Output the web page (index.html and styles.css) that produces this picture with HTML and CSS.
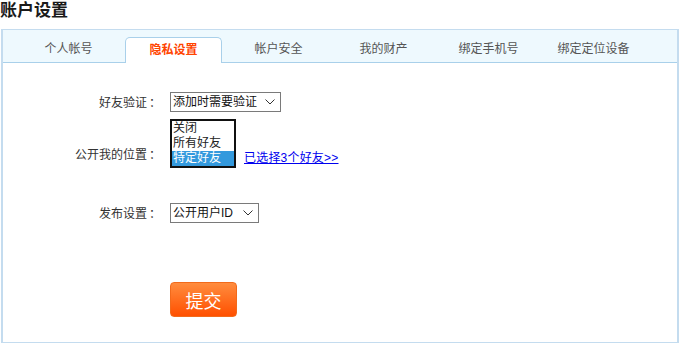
FILE: index.html
```html
<!DOCTYPE html>
<html lang="zh-CN">
<head>
    <meta charset="UTF-8">
    <title>账户设置</title>
    <link rel="stylesheet" href="styles.css">
</head>
<body>
    <h1 class="page-title">账户设置</h1>

    <div class="panel">
        <!-- 选项卡 -->
        <ul class="tabs">
            <li class="tab">个人帐号</li>
            <li class="tab active">隐私设置</li>
            <li class="tab">帐户安全</li>
            <li class="tab">我的财产</li>
            <li class="tab">绑定手机号</li>
            <li class="tab">绑定定位设备</li>
        </ul>

        <!-- 隐私设置表单 -->
        <form class="privacy-form">
            <div class="row">
                <label class="row-label">好友验证<span class="colon">：</span></label>
                <select class="drop drop-verify">
                    <option>添加时需要验证</option>
                    <option>允许任何人添加</option>
                    <option>拒绝任何人添加</option>
                </select>
            </div>

            <div class="row row-location">
                <label class="row-label">公开我的位置<span class="colon">：</span></label>
                <div class="listbox">
                    <div class="listbox-item">关闭</div>
                    <div class="listbox-item">所有好友</div>
                    <div class="listbox-item selected">特定好友</div>
                </div>
                <a class="friends-link" href="#">已选择3个好友&gt;&gt;</a>
            </div>

            <div class="row row-publish">
                <label class="row-label">发布设置<span class="colon">：</span></label>
                <select class="drop drop-publish">
                    <option>公开用户ID</option>
                    <option>匿名发布</option>
                </select>
            </div>

            <div class="row row-submit">
                <button type="button" class="submit-btn">提交</button>
            </div>
        </form>
    </div>
</body>
</html>
```

FILE: styles.css
```css
/* 账户设置 - 隐私设置页 */
body {
    margin: 0;
    font-family: "Liberation Sans", "Noto Sans CJK SC", sans-serif;
    font-size: 12px;
    color: #333;
    background: #fff;
}
.page-title {
    margin: 0 0 7px;
    font-size: 17px;
    line-height: 22px;
    color: #1a1a1a;
    font-weight: bold;
}
.panel {
    margin-left: 1px;
    width: 678px;
    height: 314px;
    box-sizing: border-box;
    border: 1px solid #c4dcef;
    border-left-width: 2px;
    border-right-width: 2px;
}
.tabs {
    list-style: none;
    margin: 0;
    padding: 7px 0 0 17px;
    height: 25px;
    display: flex;
    background: #eef9fe;
    border-bottom: 1px solid #a9d0ea;
}
.tab {
    width: 97px;
    height: 25px;
    margin-right: 8px;
    box-sizing: border-box;
    text-align: center;
    line-height: 24px;
    font-size: 12px;
    color: #555;
}
.tab.active {
    background: #fff;
    border: 1px solid #a9d0ea;
    border-bottom: none;
    border-radius: 5px 5px 0 0;
    height: 26px;
    color: #ff4400;
    font-weight: bold;
}
.privacy-form {
    padding-top: 29px;
}
.row {
    display: flex;
    align-items: center;
}
.row-label {
    width: 158px;
    text-align: right;
    margin-right: 9px;
    line-height: 16px;
    color: #333;
}
/* 居中的全角冒号 */
.colon {
    font-family: "Noto Sans CJK TC", sans-serif;
    margin-left: 2px;
}
.drop {
    -webkit-appearance: none;
    appearance: none;
    height: 20px;
    margin: 0;
    padding: 0 20px 0 2px;
    border: 1px solid #7a7a7a;
    border-radius: 0;
    font-family: "Liberation Sans", "Noto Sans CJK SC", sans-serif;
    font-size: 12px;
    color: #111;
    background: #fff url("data:image/svg+xml;utf8,<svg xmlns='http://www.w3.org/2000/svg' width='10' height='6'><path d='M0.5 0.5 L5 5 L9.5 0.5' fill='none' stroke='%23333' stroke-width='1'/></svg>") no-repeat right 5px center;
}
.drop-verify {
    width: 111px;
}
.drop-publish {
    width: 89px;
}
.row-location {
    margin-top: 7px;
    align-items: flex-end;
}
.row-location .row-label {
    margin-bottom: 5px;
}
.listbox {
    width: 66px;
    box-sizing: border-box;
    border: 2px solid #111;
    background: #fff;
}
.listbox-item {
    height: 15px;
    line-height: 15px;
    padding-left: 1px;
    font-size: 12px;
    color: #222;
}
.listbox-item.selected {
    background: #3399dd;
    color: #fff;
}
.friends-link {
    margin-left: 8px;
    margin-bottom: 2px;
    line-height: 16px;
    color: #0000ee;
    text-decoration: underline;
    letter-spacing: 0.2px;
}
.row-publish {
    margin-top: 35px;
}
.row-submit {
    margin-top: 59px;
    padding-left: 167px;
}
.submit-btn {
    width: 67px;
    height: 35px;
    padding: 0;
    border: 1px solid #f26a1b;
    border-radius: 4px;
    background: linear-gradient(#ff8c3e, #ff5000);
    color: #fff;
    font-family: "Liberation Sans", "Noto Sans CJK SC", sans-serif;
    font-size: 18px;
    cursor: pointer;
}
```
